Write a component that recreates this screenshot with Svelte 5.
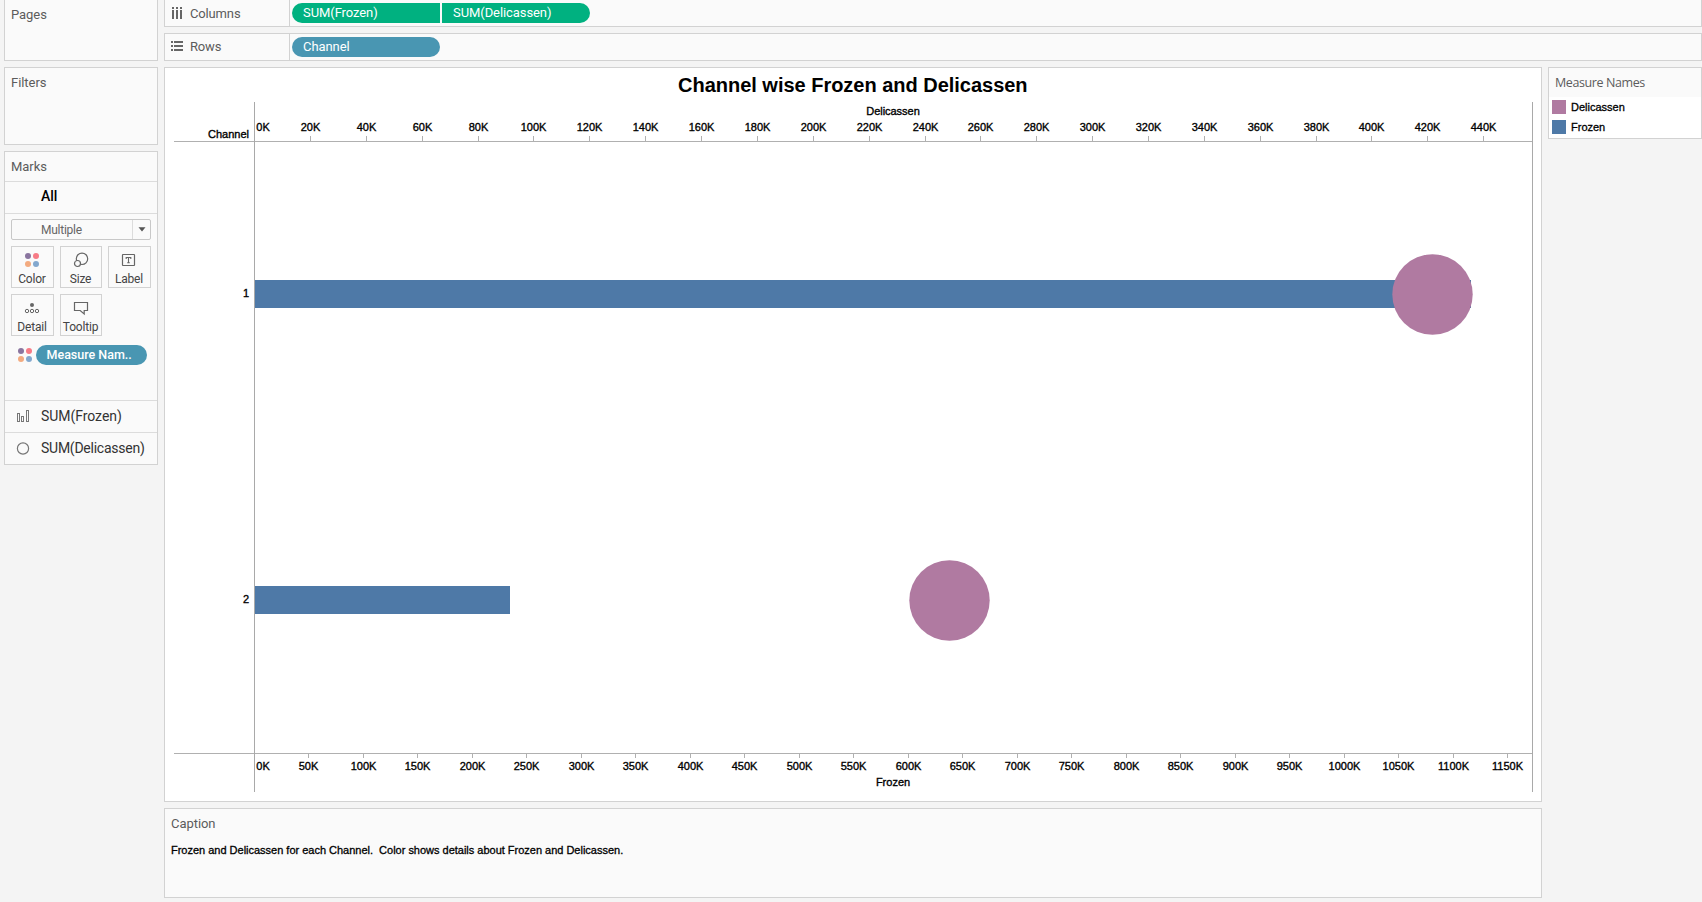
<script>
  const topTicks = Array.from({ length: 22 }, (_, i) => ({
    x: Math.round(90.1 + 55.87 * (i + 1)) + 0.5,
    label: `${(i + 1) * 20}K`
  }));
  const bottomTicks = Array.from({ length: 23 }, (_, i) => ({
    x: Math.round(89.8 + 54.5 * (i + 1)) + 0.5,
    label: `${(i + 1) * 50}K`
  }));
  const bars = [
    { name: '1', y: 212, width: 1216 },
    { name: '2', y: 518, width: 255 }
  ];
  const circles = [
    { x: 1267.5, y: 226.5 },
    { x: 784.5, y: 532.5 }
  ];
  const legend = [
    { name: 'Delicassen', color: '#b07aa1' },
    { name: 'Frozen', color: '#4e79a7' }
  ];
  const buttons = ['Color', 'Size', 'Label', 'Detail', 'Tooltip'];
</script>

{#snippet dots()}
  <svg width="14" height="14" viewBox="0 0 14 14">
    <circle cx="3" cy="3" r="3" fill="#8a759f" />
    <circle cx="11" cy="3" r="3" fill="#f77b86" />
    <circle cx="3" cy="11" r="3" fill="#f3ab80" />
    <circle cx="11" cy="11" r="3" fill="#83a8ce" />
  </svg>
{/snippet}

<div class="app">
  <aside class="side">
    <section class="panel pages"><h2>Pages</h2></section>
    <section class="panel filters"><h2>Filters</h2></section>
    <section class="panel marks">
      <h2>Marks</h2>
      <div class="all">All</div>
      <div class="card">
        <div class="select">
          <span>Multiple</span>
          <i><svg width="8" height="5" viewBox="0 0 8 5"><path d="M0.5 0.3H7.5L4 4.5Z" fill="#555" /></svg></i>
        </div>
        <div class="buttons">
          {#each buttons as name}
            <div class="button">
              {#if name === 'Color'}
                {@render dots()}
              {:else if name === 'Size'}
                <svg width="16" height="16" viewBox="0 0 16 16" fill="#fafafa" stroke="#666" stroke-width="1.2">
                  <circle cx="9" cy="6.8" r="5.7" /><circle cx="4.5" cy="11.5" r="3" />
                </svg>
              {:else if name === 'Label'}
                <svg width="16" height="16" viewBox="0 0 16 16" fill="none" stroke="#666">
                  <rect x="1.5" y="2.5" width="12" height="11" rx=".5" stroke-width="1.2" />
                  <path d="M5.2 7V5.5H9.8V7M7.5 5.5V11M6.2 10.8H8.8" stroke-width="1.1" />
                </svg>
              {:else if name === 'Detail'}
                <svg width="16" height="16" viewBox="0 0 16 16" fill="none" stroke="#666">
                  <circle cx="8" cy="5" r="2" fill="#666" stroke="none" />
                  <circle cx="3" cy="11" r="1.7" /><circle cx="8" cy="11" r="1.7" /><circle cx="13" cy="11" r="1.7" />
                </svg>
              {:else}
                <svg width="16" height="16" viewBox="0 0 16 16" fill="none" stroke="#666" stroke-width="1.2">
                  <path d="M1.5 2.5H14.5V10.5H11.2V14L7.2 10.5H1.5Z" />
                </svg>
              {/if}
              <span>{name}</span>
            </div>
          {/each}
        </div>
        <div class="encoding">{@render dots()}<span class="pill blue">Measure Nam..</span></div>
      </div>
      <div class="measure">
        <svg width="14" height="14" viewBox="0 0 14 14" fill="none" stroke="#777">
          <rect x="1.5" y="3.5" width="2" height="8" /><rect x="5.5" y="6.5" width="2" height="5" /><rect x="10.5" y="0.5" width="2" height="11" />
        </svg>
        <span>SUM(Frozen)</span>
      </div>
      <div class="measure">
        <svg width="14" height="14" viewBox="0 0 14 14" fill="none" stroke="#777" stroke-width="1.2"><circle cx="7" cy="6.5" r="5.6" /></svg>
        <span class="tight">SUM(Delicassen)</span>
      </div>
    </section>
  </aside>

  <main>
    <div class="shelf columns">
      <div class="name">
        <svg width="14" height="14" viewBox="0 0 14 14" fill="#666">
          <path d="M2 1h2v2H2zM6 1h2v2H6zM10 1h2v2h-2zM2 4h2v9H2zM6 4h2v9H6zM10 4h2v9h-2z" />
        </svg>
        <span>Columns</span>
      </div>
      <span class="pill green first">SUM(Frozen)</span><span class="pill green last">SUM(Delicassen)</span>
    </div>
    <div class="shelf rows">
      <div class="name">
        <svg width="14" height="14" viewBox="0 0 14 14" fill="#666">
          <path d="M1 1h2v2H1zM4 1h9v2H4zM1 5h2v2H1zM4 5h9v2H4zM1 9h2v2H1zM4 9h9v2H4z" />
        </svg>
        <span>Rows</span>
      </div>
      <span class="pill blue">Channel</span>
    </div>
    <div class="work">
      <div class="center">
        <section class="view">
          <svg width="1376" height="733" viewBox="1 1 1376 733">
            <text class="title" x="688.8" y="24.5" text-anchor="middle" textLength="349.5">Channel wise Frozen and Delicassen</text>
            <text x="729" y="47.5" text-anchor="middle" textLength="53.5">Delicassen</text>
            <text x="85" y="71" text-anchor="end">Channel</text>
            <g stroke="#b0b0b0" fill="none" shape-rendering="crispEdges">
              <path d="M10 74.5H1369M10 686.5H1369" />
              {#each topTicks as t}<path d="M{t.x} 69V74" />{/each}
              {#each bottomTicks as t}<path d="M{t.x} 687V691" />{/each}
            </g>
            <text x="92.3" y="64">0K</text>
            {#each topTicks as t}<text x={t.x} y="64" text-anchor="middle">{t.label}</text>{/each}
            {#each bars as b}
              <text x="85" y={b.y + 18} text-anchor="end">{b.name}</text>
              <rect x="91" y={b.y + 1} width={b.width} height="28" fill="#4e79a7" />
            {/each}
            <path d="M90.5 35V725M1368.5 35V725" stroke="#a9a9a9" shape-rendering="crispEdges" />
            {#each circles as c}<circle cx={c.x + 1} cy={c.y + 1} r="40.2" fill="#b07aa1" />{/each}
            <text x="92.3" y="703">0K</text>
            {#each bottomTicks as t}<text x={t.x} y="703" text-anchor="middle">{t.label}</text>{/each}
            <text x="729" y="719" text-anchor="middle">Frozen</text>
          </svg>
        </section>
        <section class="panel caption">
          <h2>Caption</h2>
          <p>Frozen and Delicassen for each Channel.&nbsp; Color shows details about Frozen and Delicassen.</p>
        </section>
      </div>
      <section class="legend">
        <h2>Measure Names</h2>
        {#each legend as l}
          <div class="item"><i style:background={l.color}></i><span>{l.name}</span></div>
        {/each}
      </section>
    </div>
  </main>
</div>

<style>
  :global(body) { margin: 0; background: #f4f4f4; overflow: hidden; }
  * { box-sizing: border-box; }
  svg { display: block; flex: none; }
  .app { display: flex; width: 1702px; height: 902px; padding-left: 4px; gap: 6px; background: #f4f4f4; font-family: Roboto, sans-serif; font-size: 13px; color: #555; }
  .side { width: 154px; display: flex; flex-direction: column; gap: 6px; flex: none; }
  .panel { background: #fafafa; border: 1px solid #d2d2d2; }
  h2 { margin: 0; font-weight: 400; font-size: 13px; line-height: 16px; padding: 7px 0 0 6px; letter-spacing: -.05px; color: #5c5c5c; }
  .pages { height: 61px; border-top: 0; }
  .filters { height: 78px; }
  .marks { height: 314px; }
  .marks h2 { height: 29px; }
  .all { height: 33px; border: solid #dcdcdc; border-width: 1px 0; padding-left: 36px; line-height: 29px; font-size: 14px; font-weight: 500; color: #000; }
  .card { height: 186px; padding: 5px 6px 0; }
  .select { height: 21px; width: 140px; border: 1px solid #c8c8c8; border-radius: 2px; display: flex; font-size: 12px; line-height: 20px; letter-spacing: -.25px; color: #666; }
  .select span { width: 120px; padding-left: 29px; }
  .select i { flex: 1; border-left: 1px solid #dcdcdc; display: flex; align-items: center; justify-content: center; }
  .buttons { display: grid; grid-template-columns: 43px 42px 43px; column-gap: 6px; row-gap: 6px; margin-top: 6px; width: 140px; }
  .button { height: 42px; border: 1px solid #d2d2d2; display: flex; flex-direction: column; align-items: center; justify-content: space-between; padding: 5px 1px 1px 0; font-size: 12px; line-height: 14px; letter-spacing: -.2px; color: #444; white-space: nowrap; }
  .buttons .button:first-child { padding-top: 6px; }
  .encoding { display: flex; align-items: center; gap: 4px; margin: 9px 0 0 7px; }
  .pill { height: 20px; border-radius: 10px; color: #fff; display: block; line-height: 20px; padding-left: 11px; font-size: 13px; letter-spacing: -.08px; white-space: nowrap; }
  .blue { background: #4996b2; }
  .green { background: #00b180; }
  .encoding .pill { width: 111px; font-size: 12.5px; font-weight: 500; padding-left: 10.5px; letter-spacing: 0; }
  .measure { height: 32px; border-top: 1px solid #dcdcdc; display: flex; align-items: center; padding-left: 11px; gap: 11px; font-size: 14px; line-height: 16px; letter-spacing: -.05px; color: #333; }
  .measure span { margin-top: -1px; }
  .measure .tight { letter-spacing: -.25px; }
  main { flex: 1; display: flex; flex-direction: column; gap: 6px; min-width: 0; }
  .shelf { display: flex; align-items: center; background: #fafafa; border: 1px solid #d2d2d2; height: 28px; }
  .columns { height: 27px; border-top: 0; }
  .shelf .name { width: 125px; align-self: stretch; border-right: 1px solid #d2d2d2; display: flex; align-items: center; padding-left: 5px; gap: 6px; letter-spacing: -.15px; color: #5c5c5c; margin-right: 2px; }
  .rows .name span { margin-top: -1px; }
  .shelf .pill { width: 148px; }
  .shelf .first { border-radius: 10px 0 0 10px; margin-right: 2px; }
  .shelf .last { border-radius: 0 10px 10px 0; }
  .work { display: flex; gap: 6px; }
  .center { width: 1378px; display: flex; flex-direction: column; gap: 6px; flex: none; }
  .view { height: 735px; background: #fff; border: 1px solid #d2d2d2; }
  text, .caption p, .item { font: 11px "Liberation Sans", Arial, sans-serif; fill: #000; color: #000; -webkit-text-stroke: .3px #000; }
  text { stroke: #000; stroke-width: .35px; }
  .view .title { font-size: 20px; font-weight: 700; stroke: none; -webkit-text-stroke: 0; }
  .caption { height: 90px; }
  .caption p { margin: 11px 0 0 6px; line-height: 14px; white-space: nowrap; letter-spacing: -.01px; }
  .legend { width: 154px; height: 72px; background: #fff; border: 1px solid #d2d2d2; }
  .legend h2 { height: 29px; background: #fafafa; font-family: "Open Sans", sans-serif; font-size: 12.5px; line-height: 15px; letter-spacing: -.4px; }
  .item { display: flex; align-items: center; height: 20px; gap: 5px; padding-left: 3px; }
  .item i { width: 14px; height: 14px; }
</style>
